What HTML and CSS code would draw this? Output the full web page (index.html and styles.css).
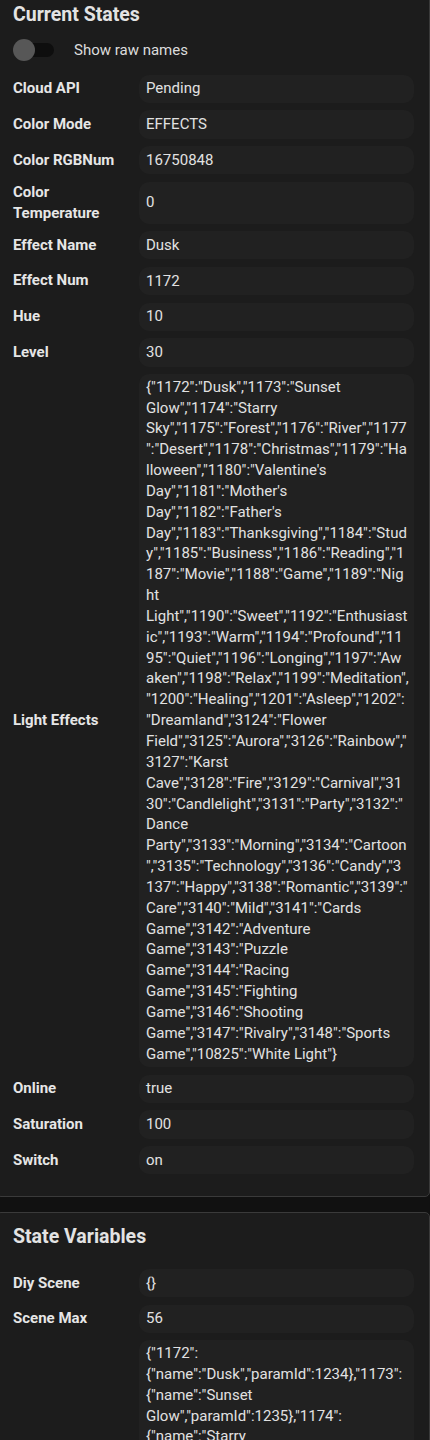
FILE: index.html
```html
<!DOCTYPE html>
<html>
<head>
<meta charset="utf-8">
<link rel="stylesheet" href="styles.css">
</head>
<body>
<div class="page">
  <section class="card">
    <h2 class="card-head">Current States</h2>
    <div class="toggle-row">
      <span class="switch"><span class="track"></span><span class="thumb"></span></span>
      <span class="toggle-label">Show raw names</span>
    </div>
    <div class="list">
      <div class="label">Cloud API</div><div class="value">Pending</div>
      <div class="label">Color Mode</div><div class="value">EFFECTS</div>
      <div class="label">Color RGBNum</div><div class="value">16750848</div>
      <div class="label">Color Temperature</div><div class="value">0</div>
      <div class="label">Effect Name</div><div class="value">Dusk</div>
      <div class="label">Effect Num</div><div class="value">1172</div>
      <div class="label">Hue</div><div class="value">10</div>
      <div class="label">Level</div><div class="value">30</div>
      <div class="label">Light Effects</div><div class="value">{"1172":"Dusk","1173":"Sunset Glow","1174":"Starry Sky","1175":"Forest","1176":"River","1177":"Desert","1178":"Christmas","1179":"Halloween","1180":"Valentine's Day","1181":"Mother's Day","1182":"Father's Day","1183":"Thanksgiving","1184":"Study","1185":"Business","1186":"Reading","1187":"Movie","1188":"Game","1189":"Night Light","1190":"Sweet","1192":"Enthusiastic","1193":"Warm","1194":"Profound","1195":"Quiet","1196":"Longing","1197":"Awaken","1198":"Relax","1199":"Meditation","1200":"Healing","1201":"Asleep","1202":"Dreamland","3124":"Flower Field","3125":"Aurora","3126":"Rainbow","3127":"Karst Cave","3128":"Fire","3129":"Carnival","3130":"Candlelight","3131":"Party","3132":"Dance Party","3133":"Morning","3134":"Cartoon","3135":"Technology","3136":"Candy","3137":"Happy","3138":"Romantic","3139":"Care","3140":"Mild","3141":"Cards Game","3142":"Adventure Game","3143":"Puzzle Game","3144":"Racing Game","3145":"Fighting Game","3146":"Shooting Game","3147":"Rivalry","3148":"Sports Game","10825":"White Light"}</div>
      <div class="label">Online</div><div class="value">true</div>
      <div class="label">Saturation</div><div class="value">100</div>
      <div class="label">Switch</div><div class="value">on</div>
    </div>
  </section>
  <section class="card">
    <h2 class="card-head">State Variables</h2>
    <div class="list">
      <div class="label">Diy Scene</div><div class="value">{}</div>
      <div class="label">Scene Max</div><div class="value">56</div>
      <div class="label">Scenes</div><div class="value">{"1172":{"name":"Dusk","paramId":1234},"1173":{"name":"Sunset Glow","paramId":1235},"1174":{"name":"Starry Sky","paramId":1236},"1175":{"name":"Forest","paramId":1237},"1176":{"name":"River","paramId":1238},"1177":{"name":"Desert","paramId":1239},"1178":{"name":"Christmas","paramId":1240},"1179":{"name":"Halloween","paramId":1241},"1180":{"name":"Valentine's Day","paramId":1242}}</div>
    </div>
  </section>
</div>
</body>
</html>
```
FILE: styles.css
```css
html, body {
  margin: 0;
  padding: 0;
  background: #111111;
}
body {
  font-family: Roboto, "Noto Sans", sans-serif;
  color: #e1e1e1;
  overflow: hidden;
}
.page {
  margin-top: -10px;
  margin-left: -4px;
  width: 434px;
}
.card {
  display: flex;
  flex-direction: column;
  background: #1c1c1c;
  border: 1px solid #3a3a3a;
  border-radius: 5px;
  padding: 10px 15px 22px 16px;
  margin-bottom: 15px;
}
.card-head {
  margin: 0 0 7px 0;
  font-size: 19.5px;
  line-height: 28px;
  font-weight: 700;
  color: #e3e3e3;
}
.toggle-row {
  display: flex;
  align-items: center;
  height: 28px;
}
.switch {
  position: relative;
  width: 41px;
  height: 22px;
  flex: none;
  margin-right: 20px;
}
.track {
  position: absolute;
  left: 0;
  top: 4px;
  width: 41px;
  height: 14px;
  border-radius: 7px;
  background: #0e0e0e;
}
.thumb {
  position: absolute;
  left: 0;
  top: 0;
  width: 22px;
  height: 22px;
  border-radius: 50%;
  background: #575757;
}
.toggle-label {
  font-size: 15px;
  color: #dcdcdc;
}
.list {
  margin-top: 10.5px;
  display: grid;
  grid-template-columns: 118px 1fr;
  column-gap: 8px;
  row-gap: 7.35px;
}
.label {
  display: flex;
  align-items: center;
  font-size: 15px;
  line-height: 21px;
  font-weight: 700;
  color: #e6e6e6;
}
.value {
  display: flex;
  align-items: center;
  min-height: 28.4px;
  box-sizing: border-box;
  padding: 2.7px 5px 2.7px 7px;
  background: #212121;
  border-radius: 10px;
  font-size: 15px;
  line-height: 20.85px;
  color: #e1e1e1;
  overflow-wrap: anywhere;
  min-width: 0;
}
```
